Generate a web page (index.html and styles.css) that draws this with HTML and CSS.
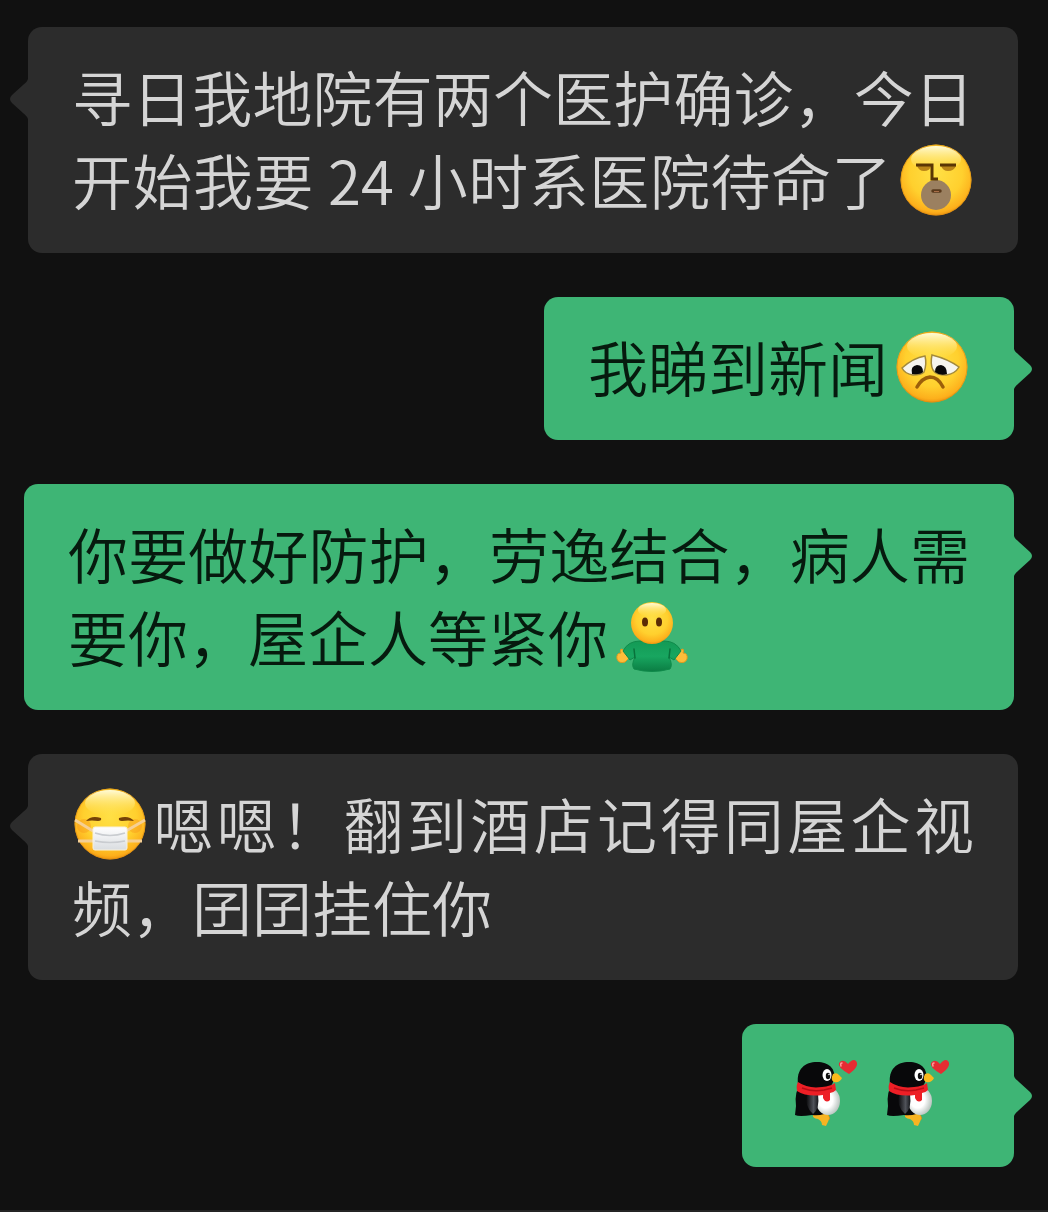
FILE: index.html
```html
<!DOCTYPE html>
<html lang="zh-CN">
<head>
    <meta charset="UTF-8" />
    <meta name="viewport" content="width=device-width, initial-scale=1" />
    <title>聊天记录</title>
    <link rel="stylesheet" href="styles.css">
</head>
<body>
    <!-- Shared shapes -->
    <svg class="defs" aria-hidden="true">
        <defs>
            <radialGradient id="skin" cx="50%" cy="40%" r="62%">
                <stop offset="0" stop-color="#ffe045" />
                <stop offset="0.6" stop-color="#ffd02e" />
                <stop offset="0.88" stop-color="#fdb01c" />
                <stop offset="1" stop-color="#e98b0c" />
            </radialGradient>
            <linearGradient id="shine" x1="0" y1="0" x2="0" y2="1">
                <stop offset="0" stop-color="#fffbd8" />
                <stop offset="1" stop-color="#ffe45a" stop-opacity="0" />
            </linearGradient>
            <linearGradient id="shirt" x1="0" y1="0" x2="0" y2="1">
                <stop offset="0" stop-color="#139a55" />
                <stop offset="0.5" stop-color="#18a660" />
                <stop offset="1" stop-color="#0b7d43" />
            </linearGradient>
            <linearGradient id="mask" x1="0" y1="0" x2="0" y2="1">
                <stop offset="0" stop-color="#ffffff" />
                <stop offset="1" stop-color="#d9dce0" />
            </linearGradient>
            <radialGradient id="belly" cx="40%" cy="45%" r="60%">
                <stop offset="0.5" stop-color="#ffffff" />
                <stop offset="1" stop-color="#b9c4bf" />
            </radialGradient>
            <linearGradient id="wing" x1="0" y1="0" x2="1" y2="0">
                <stop offset="0" stop-color="#0a0a0c" />
                <stop offset="0.6" stop-color="#50535a" />
                <stop offset="1" stop-color="#15161a" />
            </linearGradient>
        </defs>
        <symbol id="face" viewBox="0 0 72 72">
            <circle cx="36" cy="36" r="35.5" fill="url(#skin)" />
            <ellipse cx="36" cy="15" rx="25" ry="13" fill="url(#shine)" />
            <circle cx="36" cy="36" r="35" fill="none" stroke="#d98a10" stroke-opacity="0.6" />
        </symbol>
        <symbol id="tail" viewBox="0 0 18 40">
            <path d="M0 0C1 3 3 4 5 6L16 16Q20 20 16 24L5 34C3 36 1 37 0 40Z" />
        </symbol>
        <symbol id="penguin" viewBox="0 0 72 72">
            <path d="M29 55Q36 56 36 61L32 64Q25 60 19 58Z" fill="#e88b12" />
            <path d="M19 57L32 55Q38 58 32 68L28 67Q28 63 24 61Q18 60 19 57Z" fill="#f7b422" />
            <path d="M7 25Q0 34 2 48L1 57Q5 59 18 57Q40 59 43 40L35 25Z" fill="#08080a" />
            <ellipse cx="34" cy="43" rx="12" ry="14" fill="url(#belly)" />
            <path d="M13 36Q10 48 19 56Q26 51 24 36Z" fill="url(#wing)" />
            <path d="M4 26C2 11 11 4 23 4C35 4 42 11 40 21Q38 30 31 32Q14 32 4 26Z" fill="#08080a" />
            <path d="M4 24Q14 31 28 29Q37 28 41 25L42 32Q39 35 36 35L36 42Q32 46 29 40L29 37Q12 39 3 33Q2 27 4 24Z" fill="#ed1f26" />
            <path d="M8 30Q18 34 30 32L38 30" fill="none" stroke="#b90d16" stroke-width="1.5" />
            <ellipse cx="33" cy="17" rx="4.5" ry="6" fill="#fff" />
            <ellipse cx="34" cy="18" rx="2.2" ry="3.2" fill="#111" />
            <circle cx="35" cy="16.5" r="0.8" fill="#fff" />
            <path d="M39 16Q43 14 45 17L48 20Q46 25 40 24Q36 22 39 16Z" fill="#fbb91c" />
            <path d="M55 16Q43 9 45 5Q49 0 54 6Q59 0 62 3Q66 8 55 16Z" fill="#e52c32" />
            <path d="M48 5Q46 5 47 8" fill="none" stroke="#ff9c9c" stroke-width="1.5" stroke-linecap="round" />
        </symbol>
    </svg>

    <main class="chat">
        <div class="message received filled">
            <svg class="tail" aria-hidden="true"><use href="#tail" /></svg>
            <p class="text">寻日我地院有两个医护确诊，今日开始我要 24 小时系医院待命了<svg class="emoji" viewBox="0 0 72 72" role="img" aria-label="叹气">
                <use href="#face" />
                <path d="M17 22H31Q30 27 24 27Q19 27 17 22ZM41 22H56Q54 27 48 27Q43 27 41 22Z" fill="#b98418" />
                <circle cx="36" cy="51" r="15" fill="#9b8060" />
                <path d="M16 21H32V35H38M40 21H56" fill="none" stroke="#5a3604" stroke-width="3" />
                <path d="M33 47H40" stroke="#5a3a1c" stroke-width="3.5" stroke-linecap="round" />
                <path d="M34 47.5H39" stroke="#a86e48" stroke-width="1" />
            </svg></p>
        </div>

        <div class="message sent">
            <svg class="tail" aria-hidden="true"><use href="#tail" /></svg>
            <p class="text">我睇到新闻<svg class="emoji" viewBox="0 0 72 72" role="img" aria-label="难过">
                <use href="#face" />
                <path d="M6 37Q17 27 29 25Q31 33 28 41Q25 44 17 44Q9 43 6 37Z" fill="#f6f5ee" stroke="#a38a3c" stroke-width="1.5" />
                <path d="M36 24Q52 28 63 36Q59 43 50 44Q40 44 37 39Q34 33 36 24Z" fill="#f6f5ee" stroke="#a38a3c" stroke-width="1.5" />
                <path d="M16 43Q14 35 21 34Q27 34 27 41Q24 44 16 43Z" fill="#090909" />
                <path d="M39 41Q39 34 45 34Q51 35 51 43Q44 45 39 41Z" fill="#090909" />
                <path d="M21 56Q26 47 34 46Q42 46 47 56" fill="none" stroke="#9c5f0a" stroke-width="3.5" stroke-linecap="round" />
            </svg></p>
        </div>

        <div class="message sent">
            <svg class="tail" aria-hidden="true"><use href="#tail" /></svg>
            <p class="text">你要做好防护，劳逸结合，病人需要你，屋企人等紧你<svg class="emoji" viewBox="0 0 72 72" role="img" aria-label="拥抱">
                <path d="M10 50L5 48Q4 50 5 52Q0 52 1 58Q3 63 9 61L14 56Z" fill="#fdbd3a" stroke="#e29a1c" />
                <path d="M62 50L67 48Q68 50 67 52Q72 52 71 58Q69 63 63 61L58 56Z" fill="#fdbd3a" stroke="#e29a1c" />
                <path d="M24 40Q12 40 7 50L14 59L19 56Q15 64 18 68Q36 73 54 68Q57 64 53 56L58 59L65 50Q60 40 48 40Z" fill="url(#shirt)" stroke="#0f8a4a" />
                <path d="M18 48L19 57M54 48L53 57" stroke="#08723b" stroke-width="1.5" stroke-linecap="round" />
                <circle cx="36" cy="22" r="21" fill="url(#skin)" />
                <ellipse cx="36" cy="9" rx="14" ry="7" fill="url(#shine)" />
                <ellipse cx="29" cy="21" rx="3" ry="4.5" fill="#5b2b05" />
                <ellipse cx="43" cy="21" rx="3" ry="4.5" fill="#5b2b05" />
            </svg></p>
        </div>

        <div class="message received">
            <svg class="tail" aria-hidden="true"><use href="#tail" /></svg>
            <p class="text"><svg class="emoji leading" viewBox="0 0 72 72" role="img" aria-label="戴口罩">
                <use href="#face" />
                <circle cx="10" cy="38" r="7" fill="#f58a18" opacity="0.35" />
                <circle cx="61" cy="38" r="7" fill="#f58a18" opacity="0.35" />
                <path d="M1 32L19 43M4 53H20M71 32L52 43M68 53H52" fill="none" stroke="#f5cf94" stroke-width="3" />
                <path d="M12 33Q17 27 27 30Q28 33 24 33Q18 32 12 33ZM60 33Q55 27 45 30Q44 33 48 33Q54 32 60 33Z" fill="#754207" />
                <rect x="19" y="39" width="34" height="23" rx="2" fill="url(#mask)" stroke="#f8f0dc" />
                <path d="M21 45Q36 50 51 45M21 53Q36 56 51 53" fill="none" stroke="#c9ccd0" stroke-width="1.5" />
            </svg>嗯嗯！翻到酒店记得同屋企视频，囝囝挂住你</p>
        </div>

        <div class="message sent">
            <svg class="tail" aria-hidden="true"><use href="#tail" /></svg>
            <p class="text stickers"><svg class="sticker" role="img" aria-label="企鹅"><use href="#penguin" /></svg><svg class="sticker" role="img" aria-label="企鹅"><use href="#penguin" /></svg></p>
        </div>
    </main>
</body>
</html>
```

FILE: styles.css
```css
:root {
    --page: #111111;
    --received: #2c2c2c;
    --sent: #3eb575;
    --bubble-pad: 44px;
}
* { box-sizing: border-box; }
body {
    margin: 0;
    background: var(--page);
    font-family: "Noto Sans CJK SC", sans-serif;
    font-weight: 350;
}
.defs {
    position: absolute;
    width: 0;
    height: 0;
}

/* Conversation */
.chat {
    display: flex;
    flex-direction: column;
    gap: 44px;
    padding: 27px 0 43px;
    border-bottom: 2px solid #242424;
}
.message {
    position: relative;
    padding: 27px var(--bubble-pad) 33px;
    border-radius: 14px;
}
.received {
    align-self: flex-start;
    margin: 0 30px 0 28px;
    background: var(--received);
    color: #d5d5d5;
}
.sent {
    align-self: flex-end;
    margin: 0 34px 0 24px;
    background: var(--sent);
    color: #061a0e;
}
.text {
    margin: 0;
    font-size: 60px;
    line-height: 83px;
    text-align: justify;
}
.filled .text { text-align-last: justify; }

/* Bubble tails */
.tail {
    position: absolute;
    top: 52px;
    width: 18px;
    height: 40px;
}
.sent .tail {
    left: 100%;
    fill: var(--sent);
}
.received .tail {
    right: 100%;
    fill: var(--received);
    transform: scaleX(-1);
}

/* Emoji and stickers */
.emoji {
    width: 72px;
    height: 72px;
    margin: 0 2px 0 8px;
    vertical-align: -11px;
}
.emoji.leading { margin: 0 4px 0 2px; }
.stickers {
    display: flex;
}
.sticker {
    width: 72px;
    height: 72px;
    margin: 7px 12px 4px 8px;
}
```
